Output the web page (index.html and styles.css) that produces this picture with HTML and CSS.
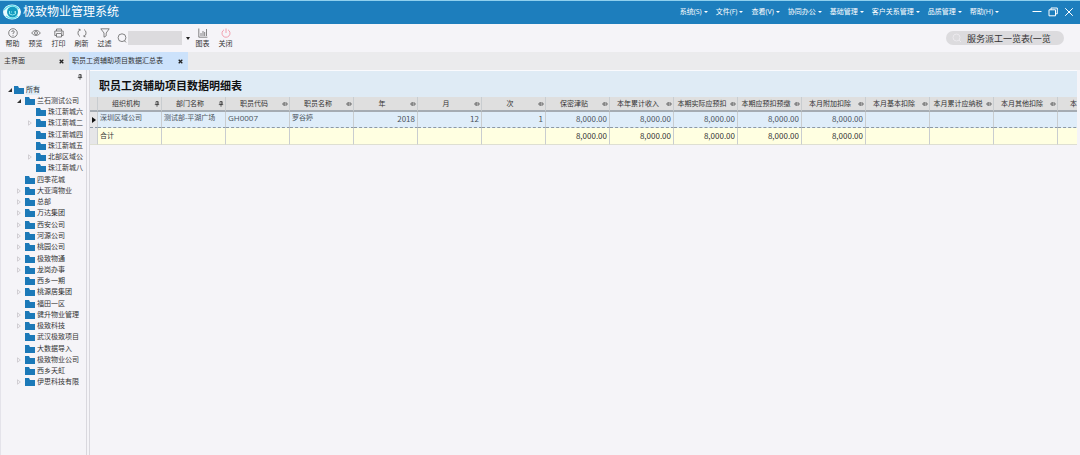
FILE: index.html
```
<!DOCTYPE html>
<html lang="zh-CN">
<head>
<meta charset="utf-8">
<title>极致物业管理系统</title>
<link rel="stylesheet" href="styles.css">
</head>
<body>
<svg class="sprite" aria-hidden="true">
  <symbol id="folder" viewBox="0 0 10 8"><path d="M0 0h4l1 2h5v6H0z" fill="#1c79b8"/></symbol>
  <symbol id="closed" viewBox="0 0 4 6"><path d="M.5 .8v4.4L3.3 3z" fill="none" stroke="#c3bec4" stroke-width=".7"/></symbol>
  <symbol id="open" viewBox="0 0 4 4"><path d="M4 0v4H0z" fill="#333"/></symbol>
  <symbol id="pin" viewBox="0 0 6 6"><path d="M0 3h2M2 1v4M2 2h3v2H2" fill="none" stroke="#555" stroke-width=".8"/></symbol>
  <symbol id="pin-down" viewBox="0 0 6 6"><path d="M2 .5h2v3H2zM.8 3.6h4.4M3 3.6v2.2M3.9 .5v3" fill="none" stroke="#444" stroke-width=".8"/></symbol>
</svg>
<div class="app">
  <header class="titlebar">
    <svg class="logo" viewBox="0 0 18 18"><ellipse cx="9" cy="9" rx="9" ry="7.500" fill="#e9fbff"/><circle cx="9.500" cy="9" r="5.500" fill="#159bc0"/><path d="M1 7Q9-1 16 6M3 13q6 5 12 0" fill="none" stroke="#5bdcec" stroke-width="1.200"/><path d="M6.500 8v3q3 2 6 0V8M8 9h1M11 9h1" fill="none" stroke="#91e8ee"/></svg>
    <h1 class="brand">极致物业管理系统</h1>
    <nav class="menu">
      <button class="menu-item">系统(S)</button>
      <button class="menu-item">文件(F)</button>
      <button class="menu-item">查看(V)</button>
      <button class="menu-item">协同办公</button>
      <button class="menu-item">基础管理</button>
      <button class="menu-item">客户关系管理</button>
      <button class="menu-item">品质管理</button>
      <button class="menu-item">帮助(H)</button>
    </nav>
    <div class="window-controls">
      <button class="window-button" aria-label="最小化"><svg viewBox="0 0 10 10"><path d="M.5 4.500h9"/></svg></button>
      <button class="window-button" aria-label="还原"><svg viewBox="0 0 10 10"><path d="M1 2.800h6.500v6H1zM3 2.800V1h6.300v5.800H7.500"/></svg></button>
      <button class="window-button" aria-label="关闭窗口"><svg viewBox="0 0 10 10"><path d="M1.200 1.200l7.600 7.600M8.800 1.200L1.200 8.800"/></svg></button>
    </div>
  </header>

  <div class="toolbar">
    <button class="tool"><svg viewBox="0 0 10 10"><circle cx="5" cy="5" r="4.300"/><path d="M3.700 4q.1-1.300 1.300-1.300T6.300 4Q6.200 4.800 5 5.300v.8M5 7v.8"/></svg>帮助</button>
    <button class="tool"><svg viewBox="0 0 10 10"><path d="M.6 5Q5-.5 9.400 5 5 10 .6 5z"/><circle cx="5" cy="5" r="1.500"/></svg>预览</button>
    <button class="tool"><svg viewBox="0 0 10 10"><path d="M2.500 3V1h5v2M2.500 7.500H.8V3h8.400v4.500H7.500M2.500 5.500h5V9h-5zM7 4.200h1"/></svg>打印</button>
    <button class="tool"><svg viewBox="0 0 10 10"><path d="M3 8.500A4 4 0 0 1 3 1.500M7 1.500a4 4 0 0 1 0 7M1.500 1.200L3.200 1.400 2.800 3M8.500 8.800L6.800 8.600 7.200 7"/></svg>刷新</button>
    <button class="tool"><svg viewBox="0 0 10 10"><path d="M.8 .8h8.400L6.200 5v2.800L4 9.200V5z"/></svg>过滤</button>
    <div class="lookup">
      <svg class="lookup-icon" viewBox="0 0 10 10"><circle cx="5" cy="4.700" r="3.900"/><path d="M7.500 7.800L9 9.400"/></svg>
      <select class="lookup-select" aria-label="搜索"><option></option></select>
    </div>
    <button class="tool"><svg viewBox="0 0 10 10"><path d="M.8 .5v8.700h8.600M3 8V5M5 8V3M6.700 8V4M8.500 8V1"/></svg>图表</button>
    <button class="tool tool-close"><svg viewBox="0 0 10 10"><path d="M3 1.800a4 4 0 1 0 4 0M5 .5V5"/></svg>关闭</button>
    <label class="quick"><svg class="quick-icon" viewBox="0 0 10 10"><circle cx="4.500" cy="4.500" r="3.500"/><path d="M7 7l2 2"/></svg><input class="quick-input" type="text" aria-label="快速查找" value="服务派工一览表(一览"></label>
  </div>

  <div class="tabs">
    <div class="tab tab-home"><a class="tab-link" href="#home">主界面</a><button class="tab-close" aria-label="关闭主界面"><svg viewBox="0 0 5 5"><path d="M.7 .7l3.600 3.600M4.300 .7l-3.600 3.600"/></svg></button></div>
    <div class="tab tab-active"><a class="tab-link" href="#detail">职员工资辅助项目数据汇总表</a><button class="tab-close" aria-label="关闭汇总表"><svg viewBox="0 0 5 5"><path d="M.7 .7l3.600 3.600M4.300 .7l-3.600 3.600"/></svg></button></div>
  </div>

  <div class="workspace">
    <aside class="sidebar">
      <div class="sidebar-head"><svg class="pin" role="img" aria-label="固定"><use href="#pin-down"/></svg></div>
      <ul class="tree">
        <li class="node root"><svg class="arrow"><use href="#open"/></svg><svg class="folder"><use href="#folder"/></svg><span class="selected">所有</span></li>
        <li class="node"><svg class="arrow"><use href="#open"/></svg><svg class="folder"><use href="#folder"/></svg>兰石测试公司</li>
        <li class="node leaf"><svg class="arrow"></svg><svg class="folder"><use href="#folder"/></svg>珠江新城六</li>
        <li class="node leaf"><svg class="arrow"><use href="#closed"/></svg><svg class="folder"><use href="#folder"/></svg>珠江新城二</li>
        <li class="node leaf"><svg class="arrow"></svg><svg class="folder"><use href="#folder"/></svg>珠江新城四</li>
        <li class="node leaf"><svg class="arrow"></svg><svg class="folder"><use href="#folder"/></svg>珠江新城五</li>
        <li class="node leaf"><svg class="arrow"><use href="#closed"/></svg><svg class="folder"><use href="#folder"/></svg>北部区域公</li>
        <li class="node leaf"><svg class="arrow"></svg><svg class="folder"><use href="#folder"/></svg>珠江新城八</li>
        <li class="node"><svg class="arrow"></svg><svg class="folder"><use href="#folder"/></svg>四季花城</li>
        <li class="node"><svg class="arrow"><use href="#closed"/></svg><svg class="folder"><use href="#folder"/></svg>大亚湾物业</li>
        <li class="node"><svg class="arrow"><use href="#closed"/></svg><svg class="folder"><use href="#folder"/></svg>总部</li>
        <li class="node"><svg class="arrow"><use href="#closed"/></svg><svg class="folder"><use href="#folder"/></svg>万达集团</li>
        <li class="node"><svg class="arrow"><use href="#closed"/></svg><svg class="folder"><use href="#folder"/></svg>西安公司</li>
        <li class="node"><svg class="arrow"><use href="#closed"/></svg><svg class="folder"><use href="#folder"/></svg>河源公司</li>
        <li class="node"><svg class="arrow"><use href="#closed"/></svg><svg class="folder"><use href="#folder"/></svg>桃园公司</li>
        <li class="node"><svg class="arrow"><use href="#closed"/></svg><svg class="folder"><use href="#folder"/></svg>极致物通</li>
        <li class="node"><svg class="arrow"><use href="#closed"/></svg><svg class="folder"><use href="#folder"/></svg>龙岗办事</li>
        <li class="node"><svg class="arrow"></svg><svg class="folder"><use href="#folder"/></svg>西乡一期</li>
        <li class="node"><svg class="arrow"><use href="#closed"/></svg><svg class="folder"><use href="#folder"/></svg>桃源居集团</li>
        <li class="node"><svg class="arrow"></svg><svg class="folder"><use href="#folder"/></svg>福田一区</li>
        <li class="node"><svg class="arrow"><use href="#closed"/></svg><svg class="folder"><use href="#folder"/></svg>健升物业管理</li>
        <li class="node"><svg class="arrow"><use href="#closed"/></svg><svg class="folder"><use href="#folder"/></svg>极致科技</li>
        <li class="node"><svg class="arrow"></svg><svg class="folder"><use href="#folder"/></svg>武汉极致项目</li>
        <li class="node"><svg class="arrow"></svg><svg class="folder"><use href="#folder"/></svg>大数据导入</li>
        <li class="node"><svg class="arrow"><use href="#closed"/></svg><svg class="folder"><use href="#folder"/></svg>极致物业公司</li>
        <li class="node"><svg class="arrow"></svg><svg class="folder"><use href="#folder"/></svg>西乡天虹</li>
        <li class="node"><svg class="arrow"><use href="#closed"/></svg><svg class="folder"><use href="#folder"/></svg>伊思科技有限</li>
      </ul>
    </aside>

    <main class="content">
      <h2 class="report-title">职员工资辅助项目数据明细表</h2>
      <table class="grid">
        <colgroup><col class="col-mark"><col span="16" class="col-data"></colgroup>
        <thead>
          <tr>
            <th></th>
            <th><div class="head">组织机构<svg class="pin"><use href="#pin-down"/></svg></div></th>
            <th><div class="head">部门名称<svg class="pin"><use href="#pin-down"/></svg></div></th>
            <th><div class="head">职员代码<svg class="pin"><use href="#pin"/></svg></div></th>
            <th><div class="head">职员名称<svg class="pin"><use href="#pin"/></svg></div></th>
            <th><div class="head">年<svg class="pin"><use href="#pin"/></svg></div></th>
            <th><div class="head">月<svg class="pin"><use href="#pin"/></svg></div></th>
            <th><div class="head">次<svg class="pin"><use href="#pin"/></svg></div></th>
            <th><div class="head">保密津贴<svg class="pin"><use href="#pin"/></svg></div></th>
            <th><div class="head">本年累计收入<svg class="pin"><use href="#pin"/></svg></div></th>
            <th><div class="head">本期实际应预扣<svg class="pin"><use href="#pin"/></svg></div></th>
            <th><div class="head">本期应预扣预缴<svg class="pin"><use href="#pin"/></svg></div></th>
            <th><div class="head">本月附加扣除<svg class="pin"><use href="#pin"/></svg></div></th>
            <th><div class="head">本月基本扣除<svg class="pin"><use href="#pin"/></svg></div></th>
            <th><div class="head">本月累计应纳税<svg class="pin"><use href="#pin"/></svg></div></th>
            <th><div class="head">本月其他扣除<svg class="pin"><use href="#pin"/></svg></div></th>
            <th><div class="head head-cut">本</div></th>
          </tr>
        </thead>
        <tbody>
          <tr class="record">
            <td class="mark"><svg class="marker" viewBox="0 0 4 6"><path d="M0 0v6l4-3z" fill="#111"/></svg></td>
            <td>深圳区域公司</td><td>测试部-平湖广场</td><td class="code">GH0007</td><td>罗谷婷</td>
            <td class="num">2018</td><td class="num">12</td><td class="num">1</td>
            <td class="num">8,000.00</td><td class="num">8,000.00</td><td class="num">8,000.00</td><td class="num">8,000.00</td><td class="num">8,000.00</td>
            <td></td><td></td><td></td><td></td>
          </tr>
        </tbody>
        <tfoot>
          <tr class="total">
            <td class="mark"></td>
            <td>合计</td><td></td><td></td><td></td><td></td><td></td><td></td>
            <td class="num">8,000.00</td><td class="num">8,000.00</td><td class="num">8,000.00</td><td class="num">8,000.00</td><td class="num">8,000.00</td>
            <td></td><td></td><td></td><td></td>
          </tr>
        </tfoot>
      </table>
    </main>
  </div>
</div>
</body>
</html>
```
FILE: styles.css
```
* { box-sizing: border-box; }

body {
  margin: 0;
  background: #f5f4f8;
  color: #333;
  font: 7px/10px "Open Sans", "Noto Sans CJK SC", sans-serif;
}

button, input, select {
  margin: 0;
  padding: 0;
  border: 0;
  background: none;
  color: inherit;
  font: inherit;
}

svg { display: block; flex: none; }
.sprite { position: absolute; width: 0; height: 0; }

.app { display: flex; flex-direction: column; min-height: 100vh; }

/* Title bar */
.titlebar {
  display: flex;
  align-items: center;
  height: 24px;
  padding: 0 6px 2px 3px;
  border-top: 1px solid #8fd0ee;
  background: #1d7ebd;
  color: #fff;
}
.logo { width: 18px; height: 18px; margin-right: 2px; }
.brand { margin: 0; font-size: 12px; line-height: 18px; font-weight: 400; white-space: nowrap; }
.menu { display: flex; gap: 8px; margin-left: auto; }
.menu-item { display: flex; align-items: center; gap: 2px; white-space: nowrap; }
.menu-item::after {
  content: "";
  border: 2px solid transparent;
  border-top-color: #fff;
  border-bottom: 0;
}
.window-controls { display: flex; gap: 6px; margin-left: 33px; }
.window-button svg { width: 10px; height: 10px; fill: none; stroke: #fff; }

/* Toolbar */
.toolbar {
  display: flex;
  align-items: center;
  height: 28px;
  padding: 0 16px 0 4px;
}
.tool {
  display: flex;
  flex-direction: column;
  align-items: center;
  gap: 1px;
  width: 17px;
  margin-right: 6px;
  white-space: nowrap;
}
.tool svg { width: 10px; height: 10px; fill: none; stroke: #666; stroke-width: 0.8; }
.tool-close svg { stroke: #f08a9c; }
.lookup { position: relative; display: flex; align-items: center; gap: 1px; margin: 0 4px 0 -2px; }
.lookup-icon { width: 10px; height: 10px; fill: none; stroke: #666; stroke-width: 0.8; }
.lookup-select {
  appearance: none;
  width: 62px;
  height: 14px;
  background: linear-gradient(#dcdbde, #dcdbde) no-repeat 0 0 / 54px 14px;
}
.lookup::after {
  content: "";
  position: absolute;
  right: 0;
  top: 6px;
  border: 2px solid transparent;
  border-top: 3px solid #222;
  border-bottom: 0;
  pointer-events: none;
}
.quick {
  display: flex;
  align-items: center;
  gap: 5px;
  width: 118px;
  height: 14px;
  margin-left: auto;
  padding: 0 6px;
  border-radius: 7px;
  background: #dcdbde;
}
.quick-icon { width: 10px; height: 10px; fill: none; stroke: #eceaee; }
.quick-input { flex: 1; min-width: 0; height: 14px; font-size: 9px; }

/* Document tabs */
.tabs { display: flex; height: 18px; background: #ebebed; }
.tab {
  display: flex;
  align-items: center;
  justify-content: space-between;
  padding: 0 5px 0 4px;
}
.tab-home { width: 69px; background: #e2e2e3; }
.tab-active { width: 119px; padding-left: 3px; background: #cce2fb; }
.tab-link { color: #333; text-decoration: none; white-space: nowrap; }
.tab-close svg { width: 5px; height: 5px; fill: none; stroke: #222; stroke-width: 1.3; }

/* Organisation tree */
.workspace { display: flex; flex: 1; }
.sidebar {
  flex: none;
  width: 87px;
  padding-left: 7px;
  border-left: 1px solid #e4e3ea;
  border-right: 1px solid #d9d8de;
}
.sidebar-head { display: flex; justify-content: flex-end; height: 14px; padding: 4px 3px 0 0; }
.pin { width: 6px; height: 6px; }
.tree {
  display: grid;
  grid-auto-rows: 1fr;
  min-height: 304px;
  margin: 0;
  padding: 0;
  list-style: none;
}
.node { display: flex; align-items: center; padding-left: 9px; white-space: nowrap; }
.root { padding-left: 0; }
.leaf { padding-left: 20px; }
.arrow { width: 4px; height: 6px; margin-right: 4px; }
.folder { width: 10px; height: 8px; margin-right: 2px; }
.root .arrow { margin-right: 2px; }
.selected { background: #e0edf8; }

/* Report */
.content {
  flex: 1;
  min-width: 0;
  margin: 0 3px 0 2px;
  border-left: 1px solid #d9d8de;
  overflow: hidden;
}
.report-title {
  margin: 0;
  padding: 7px 9px 4px;
  border-top: 1px solid #fafafd;
  background: #dfebf5;
  color: #111;
  font-size: 11px;
  line-height: 15px;
  font-weight: 700;
}
.grid { width: 1032px; border-collapse: separate; border-spacing: 0; table-layout: fixed; }
.col-mark { width: 8px; }
.col-data { width: 64px; }
.grid th, .grid td {
  padding: 1px 2px 0;
  overflow: hidden;
  border-right: 1px solid #c9cdd0;
  font-weight: 400;
  text-align: left;
  white-space: nowrap;
}
.grid th {
  height: 15px;
  padding: 1px 0 0;
  border-bottom: 2px solid #a5acb3;
  background: #dfdfdf;
}
.head { display: flex; align-items: center; justify-content: space-between; }
.head::before { content: ""; }
.head .pin { margin-right: 1px; }
.head-cut { padding-left: 12px; justify-content: flex-start; }
.record td {
  height: 16px;
  border-bottom: 1px dashed #8c99a5;
  background: #dfedf9;
  color: #4a535c;
  vertical-align: top;
}
.total td { height: 17px; padding-bottom: 2px; border-bottom: 1px solid #dedfd2; background: #ffffe1; }
.grid .code { font-size: 8px; }
.grid .num {
  padding-top: 2px;
  font-family: "Noto Sans CJK SC", sans-serif;
  font-size: 8px;
  text-align: right;
}
.grid .mark { padding: 0 0 0 2px; background: #e6e6e8; vertical-align: middle; }
.marker { width: 4px; height: 6px; }
```
